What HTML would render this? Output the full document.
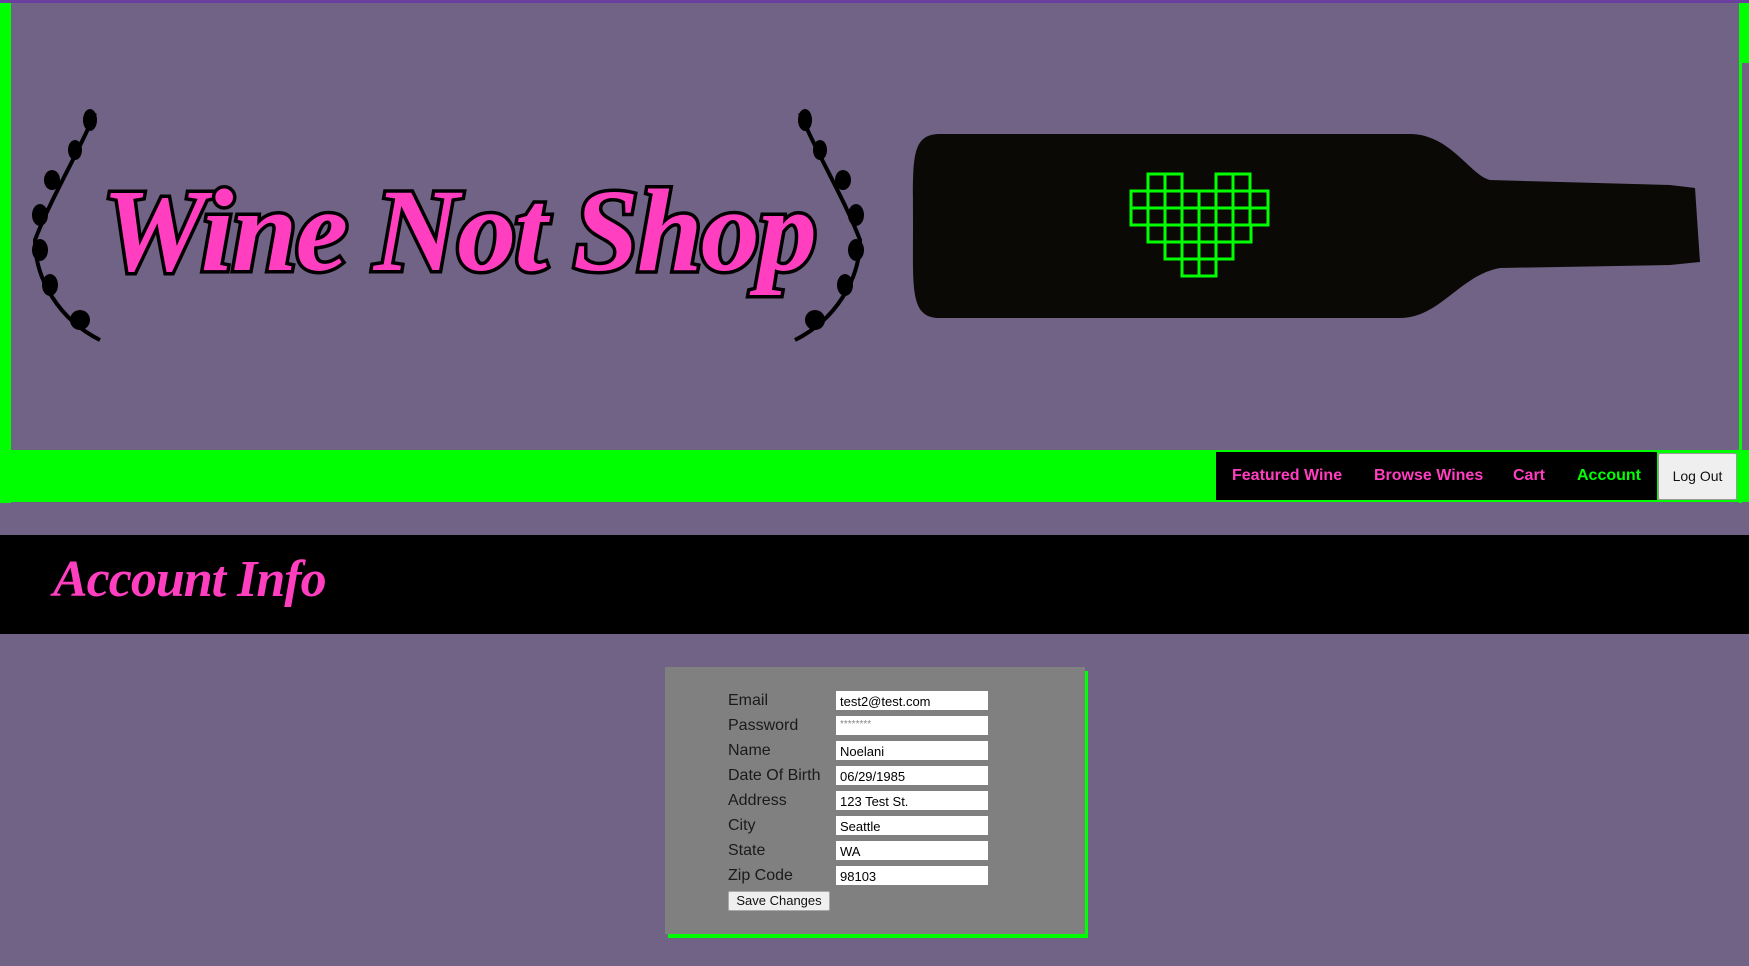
<!DOCTYPE html>
<html><head><meta charset="utf-8"><style>
*{margin:0;padding:0;box-sizing:border-box}
body{width:1749px;height:966px;background:#716385;position:relative;overflow:hidden;font-family:"Liberation Sans",sans-serif}
.abs{position:absolute}
.in{width:152px;height:19px;background:#fff;margin-bottom:6px;padding:2px 4px 0;line-height:17px}
</style></head><body>
<div class="abs" style="left:0;top:0;width:1749px;height:3px;background:#6a3fa0"></div>
<div class="abs" style="left:0;top:3px;width:11px;height:500px;background:#00ff00"></div>
<div class="abs" style="left:1739px;top:3px;width:10px;height:60px;background:#00ff00"></div>
<div class="abs" style="left:1739px;top:63px;width:3px;height:440px;background:#00ff00"></div>
<svg class="abs" style="left:0;top:0" width="1749" height="450">
<g fill="#000">
 <path d="M95 113 C80 150,50 200,35 240 C35 280,60 320,100 340" stroke="#000" stroke-width="4" fill="none"/>
 <path d="M800 113 C815 150,845 200,860 240 C860 280,835 320,795 340" stroke="#000" stroke-width="4" fill="none"/>
 <g>
 <ellipse cx="90" cy="120" rx="7" ry="11"/><ellipse cx="75" cy="150" rx="7" ry="10"/><ellipse cx="52" cy="180" rx="8" ry="10"/><ellipse cx="40" cy="215" rx="8" ry="11"/><ellipse cx="40" cy="250" rx="8" ry="11"/><ellipse cx="50" cy="285" rx="8" ry="11"/><ellipse cx="80" cy="320" rx="10" ry="10"/>
 <ellipse cx="805" cy="120" rx="7" ry="11"/><ellipse cx="820" cy="150" rx="7" ry="10"/><ellipse cx="843" cy="180" rx="8" ry="10"/><ellipse cx="856" cy="215" rx="8" ry="11"/><ellipse cx="856" cy="250" rx="8" ry="11"/><ellipse cx="845" cy="285" rx="8" ry="11"/><ellipse cx="815" cy="320" rx="10" ry="10"/>
 </g>
</g>
<text x="102" y="270" font-family="Liberation Serif" font-style="italic" font-weight="bold" font-size="118" fill="#ff3ec0" stroke="#000" stroke-width="7" paint-order="stroke" textLength="715">Wine Not Shop</text>
<path d="M940 134 L1410 134 C1450 134,1470 175,1490 180 L1670 185 L1695 188 L1700 262 L1670 265 L1500 268 C1460 275,1440 318,1400 318 L940 318 C910 318,913 290,913 225 C913 160,910 134,940 134 Z" fill="#0b0905"/>
<g fill="none" stroke="#00ff00" stroke-width="3">
 <rect x="1148" y="174" width="17" height="17"/><rect x="1165" y="174" width="17" height="17"/><rect x="1216" y="174" width="17" height="17"/><rect x="1233" y="174" width="17" height="17"/>
 <rect x="1131" y="191" width="137" height="17"/><rect x="1131" y="208" width="137" height="17"/>
 <path d="M1148 191v34M1165 191v34M1182 191v34M1199 191v34M1216 191v34M1233 191v34M1250 191v34"/>
 <rect x="1148" y="225" width="103" height="17"/><path d="M1165 225v17M1182 225v17M1199 225v17M1216 225v17M1233 225v17"/>
 <rect x="1165" y="242" width="68" height="17"/><path d="M1182 242v17M1199 242v17M1216 242v17"/>
 <rect x="1182" y="259" width="34" height="17"/><path d="M1199 259v17"/>
</g>
</svg>
<div class="abs" style="left:0;top:450px;width:1749px;height:52px;background:#00ff00"></div>
<div class="abs" style="left:1216px;top:452px;width:441px;height:48px;background:#000;color:#ff3ec0;font-weight:bold;font-size:16px;line-height:48px;white-space:nowrap">
 <span class="abs" style="left:16px">Featured Wine</span><span class="abs" style="left:158px">Browse Wines</span><span class="abs" style="left:297px">Cart</span><span class="abs" style="left:361px;color:#00ff00">Account</span>
</div>
<div class="abs" style="left:1658px;top:453px;width:79px;height:47px;background:#efefef;border:1px solid #999;border-radius:2px;font-size:14px;line-height:45px;text-align:center;color:#111">Log Out</div>
<div class="abs" style="left:0;top:535px;width:1749px;height:99px;background:#000"></div>
<div class="abs" style="left:53px;top:550px;font-family:'Liberation Serif',serif;font-style:italic;font-weight:bold;font-size:52px;color:#ff3ec0;letter-spacing:-1px">Account Info</div>
<div class="abs" style="left:668px;top:671px;width:420px;height:267px;background:#00ff00"></div>
<div class="abs" style="left:665px;top:667px;width:420px;height:267px;background:#808080"></div>
<div class="abs" style="left:728px;top:688px;font-size:16px;color:#1a1a1a;line-height:25px">Email<br>Password<br>Name<br>Date Of Birth<br>Address<br>City<br>State<br>Zip Code</div>
<div class="abs" style="left:836px;top:691px;font-size:13px;color:#000">
 <div class="in">test2@test.com</div>
 <div class="in" style="color:#888;font-size:10px;padding-top:0">********</div>
 <div class="in">Noelani</div>
 <div class="in">06/29/1985</div>
 <div class="in">123 Test St.</div>
 <div class="in">Seattle</div>
 <div class="in">WA</div>
 <div class="in" style="margin-bottom:0">98103</div>
</div>
<div class="abs" style="left:728px;top:891px;width:102px;height:20px;background:#efefef;border:1px solid #aaa;border-radius:2px;font-size:13px;line-height:18px;text-align:center;color:#111">Save Changes</div>
</body></html>
